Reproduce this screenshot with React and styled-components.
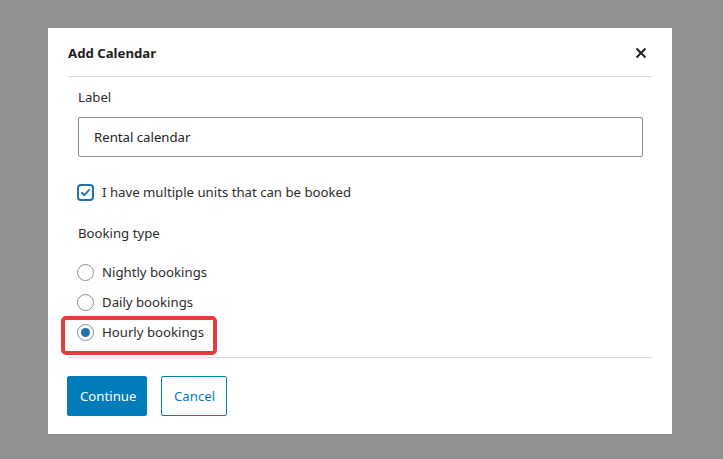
import React from "react";
import styled, { createGlobalStyle } from "styled-components";

const Global = createGlobalStyle`
  html, body { margin: 0; padding: 0; background: #919191; }
  body { font-family: "Noto Sans", "Open Sans", Arial, sans-serif; }
  * { box-sizing: border-box; }
`;

const Page = styled.div`
  width: 723px;
  height: 459px;
  padding: 28px 51px 25px 48px;
  background: #919191;
`;

const Dialog = styled.div`
  width: 624px;
  height: 406px;
  background: #fff;
  display: flex;
  flex-direction: column;
`;

const Header = styled.div`
  margin: 0 20px;
  height: 49px;
  border-bottom: 1px solid #dcdcde;
  display: flex;
  align-items: center;
  justify-content: space-between;
  padding-top: 1px;
`;

const Title = styled.h1`
  margin: 0;
  font-size: 13.2px;
  font-weight: 700;
  color: #1e1e1e;
`;

const Close = styled.button`
  border: 0;
  background: none;
  padding: 0;
  margin-right: 4px;
  width: 14px;
  height: 14px;
  display: flex;
  align-items: center;
  justify-content: center;
  color: #1e1e1e;
`;

const Body = styled.div`
  padding: 10px 29px 0 30px;
  display: flex;
  flex-direction: column;
`;

const FieldLabel = styled.div`
  font-size: 13.2px;
  line-height: 20px;
  color: #2c2c2c;
  margin-top: ${(p) => p.$mt || 0}px;
`;

const Input = styled.div`
  margin-top: 10px;
  height: 40px;
  border: 1px solid #8c8f94;
  border-radius: 2px;
  padding: 0 15px;
  display: flex;
  align-items: center;
  font-size: 13.2px;
  color: #1e1e1e;
`;

const OptionRow = styled.div`
  position: relative;
  display: flex;
  align-items: center;
  gap: 8px;
  height: 20px;
  margin-top: ${(p) => p.$mt || 0}px;
  margin-left: -1px;
  font-size: 13.2px;
  color: #2c2c2c;
`;

const CheckBox = styled.span`
  width: 17px;
  height: 17px;
  border: 2px solid #2271b1;
  border-radius: 4px;
  display: flex;
  align-items: center;
  justify-content: center;
  color: #2271b1;
`;

const Radio = styled.span`
  width: 17px;
  height: 17px;
  border-radius: 50%;
  border: 1px solid ${(p) => (p.$checked ? "#7d8fa3" : "#8c8f94")};
  display: flex;
  align-items: center;
  justify-content: center;
  &::after {
    content: "";
    width: 9px;
    height: 9px;
    border-radius: 50%;
    background: ${(p) => (p.$checked ? "#2271b1" : "transparent")};
  }
`;

const Highlight = styled.span`
  position: absolute;
  left: -16px;
  top: -6px;
  width: 156px;
  height: 39px;
  border: 4px solid #e23b40;
  border-radius: 5px;
  pointer-events: none;
`;

const Divider = styled.div`
  margin: 15px 20px 0;
  border-top: 1px solid #dcdcde;
`;

const Footer = styled.div`
  display: flex;
  gap: 14px;
  padding: 18px 0 0 19px;
`;

const Button = styled.button`
  height: 40px;
  padding: 0 12px;
  font-family: inherit;
  font-size: 13.2px;
  border-radius: 2px;
  border: 1px solid #007cba;
  background: ${(p) => (p.$primary ? "#007cba" : "#fff")};
  color: ${(p) => (p.$primary ? "#fff" : "#007cba")};
  width: ${(p) => p.$w}px;
`;

export default function App() {
  return (
    <>
      <Global />
      <Page>
        <Dialog>
          <Header>
            <Title>Add Calendar</Title>
            <Close aria-label="Close">
              <svg width="12" height="12" viewBox="0 0 12 12">
                <path d="M1.5 1.5 L10.5 10.5 M10.5 1.5 L1.5 10.5" stroke="currentColor" strokeWidth="2" fill="none" />
              </svg>
            </Close>
          </Header>
          <Body>
            <FieldLabel>Label</FieldLabel>
            <Input>Rental calendar</Input>
            <OptionRow $mt={25}>
              <CheckBox>
                <svg width="11" height="11" viewBox="0 0 12 12">
                  <path d="M2 6.3 L4.8 9 L10 3" stroke="currentColor" strokeWidth="2" fill="none" strokeLinecap="round" strokeLinejoin="round" />
                </svg>
              </CheckBox>
              I have multiple units that can be booked
            </OptionRow>
            <FieldLabel $mt={21}>Booking type</FieldLabel>
            <OptionRow $mt={19}>
              <Radio />
              Nightly bookings
            </OptionRow>
            <OptionRow $mt={10}>
              <Radio />
              Daily bookings
            </OptionRow>
            <OptionRow $mt={10}>
              <Radio $checked />
              Hourly bookings
              <Highlight />
            </OptionRow>
          </Body>
          <Divider />
          <Footer>
            <Button $primary $w={80}>Continue</Button>
            <Button $w={66}>Cancel</Button>
          </Footer>
        </Dialog>
      </Page>
    </>
  );
}
